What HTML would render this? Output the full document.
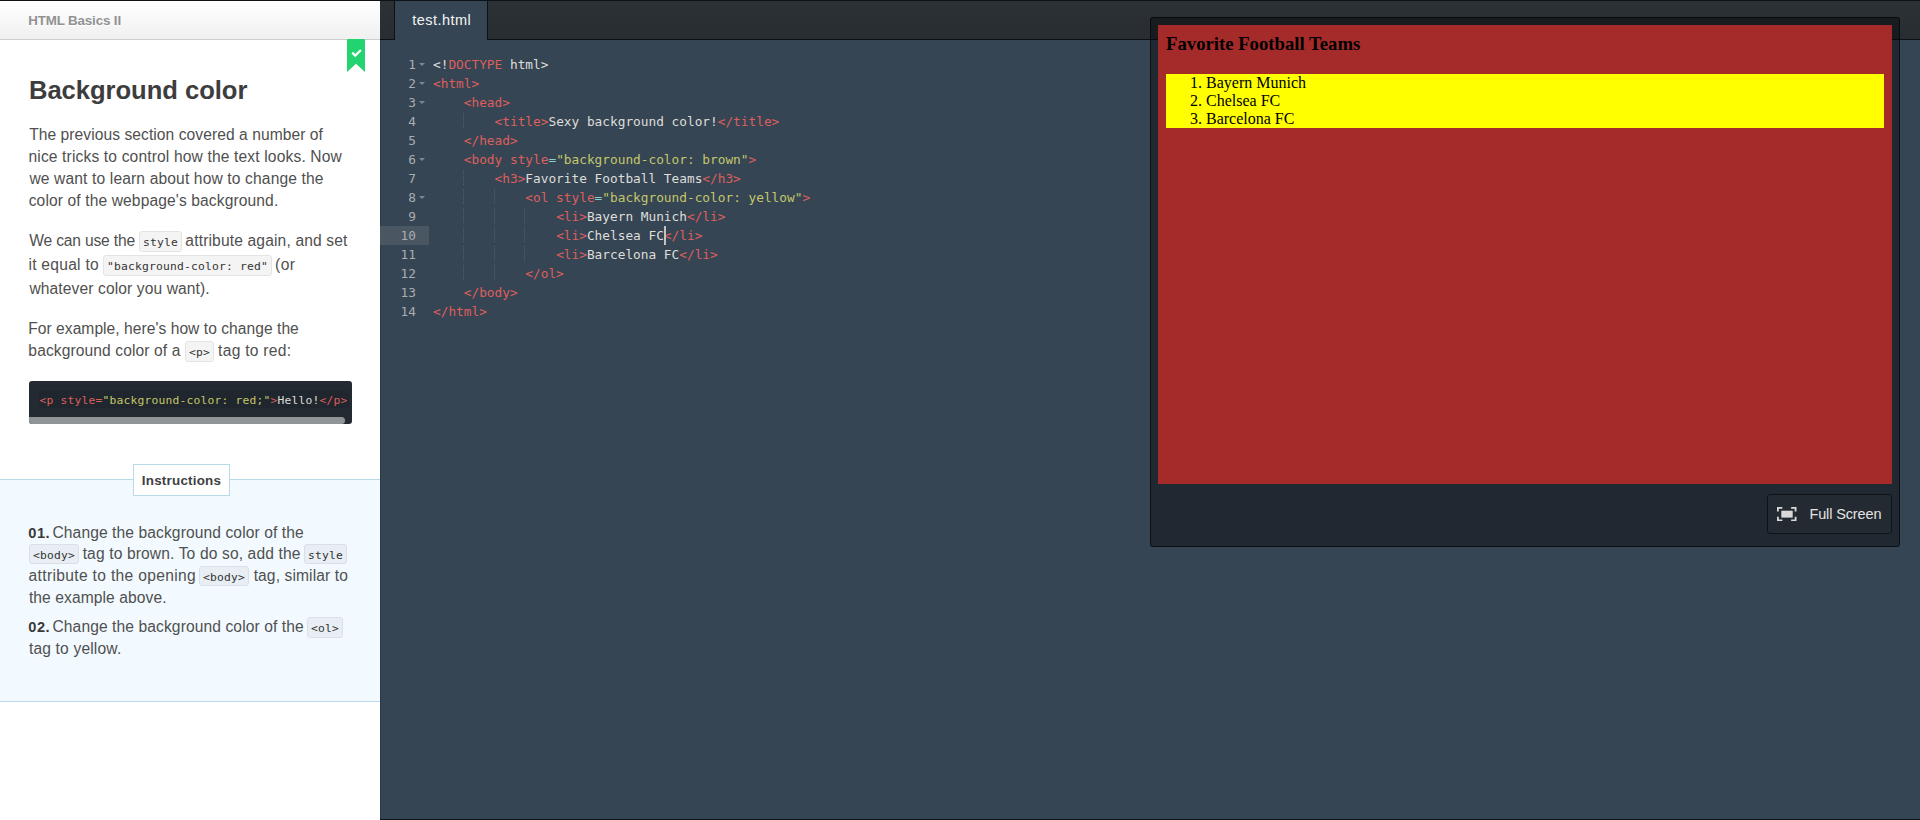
<!DOCTYPE html>
<html lang="en">
<head>
<meta charset="utf-8">
<title>Background color | HTML Basics II</title>
<style>
html,body{margin:0;padding:0;}
body{width:1920px;height:820px;overflow:hidden;position:relative;background:#364554;font-family:"Liberation Sans", sans-serif;}
.t{position:absolute;white-space:pre;line-height:20px;height:20px;}
#left{position:absolute;left:0;top:0;width:380px;height:820px;background:#fff;overflow:hidden;}
#topline{position:absolute;left:0;top:0;width:1920px;height:1px;background:#0d1217;z-index:5;}
#lhdr{position:absolute;left:0;top:1px;width:380px;height:38px;background:linear-gradient(#ffffff,#f0f0f0);border-bottom:1px solid #cdcdcd;}
#bm{position:absolute;left:347px;top:39px;width:18px;height:33px;}
.ic{position:absolute;box-sizing:border-box;border:1px solid #e4e4e4;background:#f4f4f4;border-radius:3px;}
.ic.b{border-color:#d9e1e7;background:#e8eef3;}
.ict{position:absolute;white-space:pre;line-height:20px;height:20px;font-family:"DejaVu Sans Mono", "Liberation Mono", monospace;font-size:11.3px;color:#333;}
#pre{position:absolute;left:29px;top:381px;width:323px;height:43px;background:#232a31;border-radius:3px;overflow:hidden;}
#prein{position:absolute;left:10px;top:10px;width:310px;height:17px;background:#20262d;border-radius:2px;}
#sb{position:absolute;left:0;top:36px;width:316px;height:7px;background:#8f9497;border-radius:0 4px 4px 0;}
#instr{position:absolute;left:0;top:479px;width:380px;height:221px;background:#f2faff;border-top:1px solid #b9dbe9;border-bottom:1px solid #b9dbe9;}
#ilab{position:absolute;left:133px;top:464px;width:97px;height:32px;box-sizing:border-box;background:#fff;border:1px solid #b9dbe9;}
#right{position:absolute;left:380px;top:0;width:1540px;height:820px;background:#364554;overflow:hidden;}
#tabbar{position:absolute;left:0;top:1px;width:1540px;height:38px;background:linear-gradient(#2c3136,#282d31);border-bottom:1px solid #0c1014;}
#tab{position:absolute;left:14px;top:1px;width:92px;height:39px;background:#364554;border-left:1px solid #0d1115;border-right:1px solid #0d1115;}
#ledge{position:absolute;left:0;top:40px;width:1px;height:780px;background:#2b3845;}
#bline{position:absolute;left:0;top:819px;width:1540px;height:1px;background:#10151a;}
#gact{position:absolute;left:0;top:226px;width:49px;height:19px;background:#4a5661;}
.ln{position:absolute;left:0;width:36px;text-align:right;height:19px;line-height:19px;font-family:"DejaVu Sans Mono", "Liberation Mono", monospace;font-size:12.79px;color:#a7adb2;white-space:pre;}
.fold{position:absolute;left:38.9px;width:0;height:0;border-left:3.5px solid transparent;border-right:3.5px solid transparent;border-top:3.7px solid #7d8791;}
.cl{position:absolute;left:53px;height:19px;line-height:19px;font-family:"DejaVu Sans Mono", "Liberation Mono", monospace;font-size:12.79px;color:#dededa;white-space:pre;}
.cl .g{color:#dd5f5c;} .cl .e{color:#8ccfcb;} .cl .s{color:#c3c76a;} .cl .x{color:#dededa;}
.ig{position:absolute;width:1px;height:16px;background:repeating-linear-gradient(to bottom,#525e6a 0,#525e6a 1px,transparent 1px,transparent 2px);}
#cur{position:absolute;left:284px;top:226px;width:2px;height:19px;background:#c2c2c2;}
#panel{position:absolute;left:770px;top:17px;width:750px;height:530px;box-sizing:border-box;background:rgba(0,0,0,.40);border:1px solid rgba(0,0,0,.62);border-radius:3px;}
#frame{position:absolute;left:7px;top:7px;width:734px;height:459px;background:#a52a2a;overflow:hidden;font-family:"Liberation Serif", serif;color:#000;}
#frame h3{position:absolute;left:8px;top:8px;margin:0;font-size:18.72px;line-height:21px;font-weight:bold;white-space:pre;}
#frame ol{position:absolute;left:8px;top:49px;width:718px;height:54px;margin:0;padding:0;background:#ffff00;list-style:none;}
#frame li{position:absolute;left:0;height:18px;line-height:18px;font-size:16px;white-space:pre;}
#frame li .n{position:absolute;left:0;width:36px;text-align:right;}
#frame li .v{position:absolute;left:40px;}
#fsb{position:absolute;left:616px;top:476px;width:125px;height:40px;box-sizing:border-box;background:#232a31;border:1px solid #0f1317;border-radius:3px;}
#fsi{position:absolute;left:9.2px;top:11.7px;width:19.5px;height:14.3px;}
</style>
</head>
<body>
<div id="left">
<div id="lhdr"></div>
<span class="t" id="hd" style="left:28.14px;top:11.00px;font-size:13.4px;font-weight:bold;color:#929292;letter-spacing:-0.156px;text-shadow:0 1px 0 #fff;">HTML Basics II</span>
<svg id="bm" viewBox="0 0 18 33"><path d="M0 1Q0 0 1 0H17Q18 0 18 1V33L9 24.8L0 33Z" fill="#23d36f"/><path d="M6 14.4L8.2 16.6L13.1 11.7" fill="none" stroke="#fff" stroke-width="2.2" stroke-linecap="square" stroke-linejoin="miter"/></svg>
<h1 style="margin:0;font-size:inherit;font-weight:inherit;"><span class="t" id="h1" style="left:28.97px;top:80.00px;font-size:25.6px;font-weight:bold;color:#3d3d3d;letter-spacing:-0.039px;">Background color</span></h1>
<p style="margin:0;"><span class="t" id="p1a" style="left:29.17px;top:125.00px;font-size:15.6px;font-weight:normal;color:#505050;letter-spacing:0.064px;">The previous section covered a number of</span> <span class="t" id="p1b" style="left:28.46px;top:147.00px;font-size:15.6px;font-weight:normal;color:#505050;letter-spacing:0.146px;">nice tricks to control how the text looks. Now</span> <span class="t" id="p1c" style="left:29.40px;top:169.00px;font-size:15.6px;font-weight:normal;color:#505050;letter-spacing:0.139px;">we want to learn about how to change the</span> <span class="t" id="p1d" style="left:28.70px;top:191.00px;font-size:15.6px;font-weight:normal;color:#505050;letter-spacing:0.116px;">color of the webpage's background.</span></p>
<p style="margin:0;"><span class="t" id="p2a" style="left:29.25px;top:231.00px;font-size:15.6px;font-weight:normal;color:#505050;letter-spacing:-0.170px;">We can use the</span> <span class="ic w" style="left:139px;top:231px;width:43px;height:21px;"></span><code class="ict" id="c1" style="left:143.10px;top:233.00px;letter-spacing:0.197px;">style</code> <span class="t" id="p2b" style="left:185.37px;top:231.00px;font-size:15.6px;font-weight:normal;color:#505050;letter-spacing:0.149px;">attribute again, and set</span> <span class="t" id="p2c" style="left:28.46px;top:255.00px;font-size:15.6px;font-weight:normal;color:#505050;letter-spacing:0.257px;">it equal to</span> <span class="ic w" style="left:103px;top:255px;width:169px;height:21px;"></span><code class="ict" id="c2" style="left:107.10px;top:257.00px;letter-spacing:0.197px;">"background-color: red"</code> <span class="t" id="p2d" style="left:275.00px;top:255.00px;font-size:15.6px;font-weight:normal;color:#505050;letter-spacing:0.458px;">(or</span> <span class="t" id="p2e" style="left:29.40px;top:279.00px;font-size:15.6px;font-weight:normal;color:#505050;letter-spacing:0.109px;">whatever color you want).</span></p>
<p style="margin:0;"><span class="t" id="p3a" style="left:28.19px;top:319.00px;font-size:15.6px;font-weight:normal;color:#505050;letter-spacing:0.042px;">For example, here's how to change the</span> <span class="t" id="p3b" style="left:28.36px;top:341.00px;font-size:15.6px;font-weight:normal;color:#505050;letter-spacing:0.101px;">background color of a</span> <span class="ic w" style="left:185px;top:341px;width:29px;height:21px;"></span><code class="ict" id="c3" style="left:189.10px;top:343.00px;letter-spacing:0.197px;">&lt;p&gt;</code> <span class="t" id="p3c" style="left:218.10px;top:341.00px;font-size:15.6px;font-weight:normal;color:#505050;letter-spacing:0.266px;">tag to red:</span></p>
<div id="pre"><div id="prein"></div><code class="ict" id="prec" style="left:10.60px;top:10.00px;letter-spacing:0.197px;color:#dededa;"><span style="color:#dd5f5c">&lt;p style=</span><span style="color:#c3c76a">"background-color: red;"</span><span style="color:#dd5f5c">&gt;</span>Hello!<span style="color:#dd5f5c">&lt;/p&gt;</span></code><div id="sb"></div></div>
<div id="instr"></div>
<div id="ilab"></div>
<span class="t" id="il" style="left:141.85px;top:471.00px;font-size:13.4px;font-weight:bold;color:#3f3f3f;letter-spacing:0.227px;">Instructions</span>
<div><span class="t" id="i1n" style="left:28.37px;top:523.00px;font-size:14.6px;font-weight:bold;color:#3a3a3a;letter-spacing:0.409px;">01.</span> <span class="t" id="i1a" style="left:52.48px;top:523.00px;font-size:15.6px;font-weight:normal;color:#505050;letter-spacing:0.100px;">Change the background color of the</span> <span class="ic b" style="left:29px;top:544px;width:50px;height:20px;"></span><code class="ict" id="c4" style="left:33.10px;top:546.00px;letter-spacing:0.197px;">&lt;body&gt;</code> <span class="t" id="i2a" style="left:82.65px;top:544.00px;font-size:15.6px;font-weight:normal;color:#505050;letter-spacing:0.132px;">tag to brown. To do so, add the</span> <span class="ic b" style="left:304px;top:544px;width:43px;height:20px;"></span><code class="ict" id="c5" style="left:308.10px;top:546.00px;letter-spacing:0.197px;">style</code> <span class="t" id="i3a" style="left:28.59px;top:566.00px;font-size:15.6px;font-weight:normal;color:#505050;letter-spacing:0.334px;">attribute to the opening</span> <span class="ic b" style="left:199px;top:566px;width:50px;height:20px;"></span><code class="ict" id="c6" style="left:203.10px;top:568.00px;letter-spacing:0.197px;">&lt;body&gt;</code> <span class="t" id="i3b" style="left:253.65px;top:566.00px;font-size:15.6px;font-weight:normal;color:#505050;letter-spacing:0.103px;">tag, similar to</span> <span class="t" id="i4a" style="left:28.91px;top:588.00px;font-size:15.6px;font-weight:normal;color:#505050;letter-spacing:0.090px;">the example above.</span></div>
<div><span class="t" id="i5n" style="left:28.37px;top:617.00px;font-size:14.6px;font-weight:bold;color:#3a3a3a;letter-spacing:0.409px;">02.</span> <span class="t" id="i5a" style="left:52.48px;top:617.00px;font-size:15.6px;font-weight:normal;color:#505050;letter-spacing:0.100px;">Change the background color of the</span> <span class="ic b" style="left:307px;top:617px;width:36px;height:21px;"></span><code class="ict" id="c7" style="left:311.10px;top:619.00px;letter-spacing:0.197px;">&lt;ol&gt;</code> <span class="t" id="i6a" style="left:28.91px;top:639.00px;font-size:15.6px;font-weight:normal;color:#505050;letter-spacing:0.166px;">tag to yellow.</span></div>
</div>
<div id="right">
<div id="tabbar"></div>
<div id="tab"></div>
<span class="t" id="tabt" style="left:32.20px;top:10.00px;font-size:14.5px;font-weight:normal;color:#f4f4f4;letter-spacing:0.459px;">test.html</span>
<div id="ledge"></div><div id="bline"></div>
<div id="gact"></div>
<div class="ln" style="top:55px">1</div><div class="fold" style="top:63px"></div><div class="cl" style="top:55px"><span class="x">&lt;!</span><span class="g">DOCTYPE</span><span class="x"> html&gt;</span></div>
<div class="ln" style="top:74px">2</div><div class="fold" style="top:82px"></div><div class="cl" style="top:74px"><span class="g">&lt;html&gt;</span></div>
<div class="ln" style="top:93px">3</div><div class="fold" style="top:101px"></div><div class="cl" style="top:93px">    <span class="g">&lt;head&gt;</span></div>
<div class="ln" style="top:112px">4</div><div class="cl" style="top:112px">        <span class="g">&lt;title&gt;</span><span class="x">Sexy background color!</span><span class="g">&lt;/title&gt;</span></div>
<div class="ln" style="top:131px">5</div><div class="cl" style="top:131px">    <span class="g">&lt;/head&gt;</span></div>
<div class="ln" style="top:150px">6</div><div class="fold" style="top:158px"></div><div class="cl" style="top:150px">    <span class="g">&lt;body style</span><span class="e">=</span><span class="s">"background-color: brown"</span><span class="g">&gt;</span></div>
<div class="ln" style="top:169px">7</div><div class="cl" style="top:169px">        <span class="g">&lt;h3&gt;</span><span class="x">Favorite Football Teams</span><span class="g">&lt;/h3&gt;</span></div>
<div class="ln" style="top:188px">8</div><div class="fold" style="top:196px"></div><div class="cl" style="top:188px">            <span class="g">&lt;ol style</span><span class="e">=</span><span class="s">"background-color: yellow"</span><span class="g">&gt;</span></div>
<div class="ln" style="top:207px">9</div><div class="cl" style="top:207px">                <span class="g">&lt;li&gt;</span><span class="x">Bayern Munich</span><span class="g">&lt;/li&gt;</span></div>
<div class="ln" style="top:226px">10</div><div class="cl" style="top:226px">                <span class="g">&lt;li&gt;</span><span class="x">Chelsea FC</span><span class="g">&lt;/li&gt;</span></div>
<div class="ln" style="top:245px">11</div><div class="cl" style="top:245px">                <span class="g">&lt;li&gt;</span><span class="x">Barcelona FC</span><span class="g">&lt;/li&gt;</span></div>
<div class="ln" style="top:264px">12</div><div class="cl" style="top:264px">            <span class="g">&lt;/ol&gt;</span></div>
<div class="ln" style="top:283px">13</div><div class="cl" style="top:283px">    <span class="g">&lt;/body&gt;</span></div>
<div class="ln" style="top:302px">14</div><div class="cl" style="top:302px"><span class="g">&lt;/html&gt;</span></div>
<div class="ig" style="left:83.0px;top:113px"></div><div class="ig" style="left:83.0px;top:170px"></div><div class="ig" style="left:83.0px;top:189px"></div><div class="ig" style="left:114.0px;top:189px"></div><div class="ig" style="left:83.0px;top:208px"></div><div class="ig" style="left:114.0px;top:208px"></div><div class="ig" style="left:144.0px;top:208px"></div><div class="ig" style="left:83.0px;top:227px"></div><div class="ig" style="left:114.0px;top:227px"></div><div class="ig" style="left:144.0px;top:227px"></div><div class="ig" style="left:83.0px;top:246px"></div><div class="ig" style="left:114.0px;top:246px"></div><div class="ig" style="left:144.0px;top:246px"></div><div class="ig" style="left:83.0px;top:265px"></div><div class="ig" style="left:114.0px;top:265px"></div>
<div id="cur"></div>
<div id="panel"><div id="frame"><h3>Favorite Football Teams</h3><ol><li style="top:0px"><span class="n">1.</span> <span class="v">Bayern Munich</span></li><li style="top:18px"><span class="n">2.</span> <span class="v">Chelsea FC</span></li><li style="top:36px"><span class="n">3.</span> <span class="v">Barcelona FC</span></li></ol></div><div id="fsb"><svg id="fsi" viewBox="0 0 19.5 14.3"><rect x="4.3" y="3.7" width="11.4" height="6.9" fill="#d9d9d9"/><path d="M0.9 4.6V0.9H5.4M14.1 0.9H18.6V4.6M18.6 9.7V13.4H14.1M5.4 13.4H0.9V9.7" fill="none" stroke="#d9d9d9" stroke-width="1.8"/></svg></div></div>
<span class="t" id="fst" style="left:1429.45px;top:504.00px;font-size:14.5px;font-weight:normal;color:#e3e3e3;letter-spacing:-0.128px;">Full Screen</span>
</div>
<div id="topline"></div>
</body>
</html>
